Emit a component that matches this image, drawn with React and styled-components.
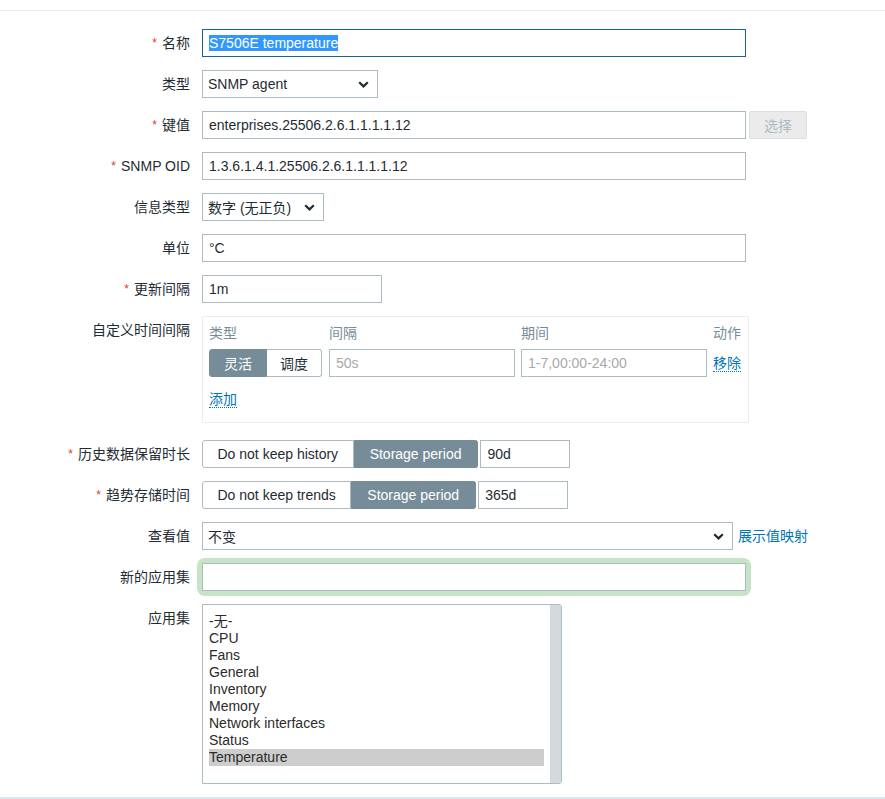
import React from 'react';
import styled, { createGlobalStyle } from 'styled-components';

const GlobalStyle = createGlobalStyle`
  html, body {
    margin: 0;
    padding: 0;
    background: #fff;
  }
  body {
    font-family: "Liberation Sans", Arial, "Noto Sans CJK SC", sans-serif;
    font-size: 14px;
    color: #1f2c33;
  }
  * {
    box-sizing: border-box;
  }
`;

const Page = styled.div`
  display: flex;
  flex-direction: column;
  height: 100vh;
  overflow: hidden;
`;

const TopRule = styled.div`
  height: 11px;
  border-bottom: 1px solid #ebebeb;
`;

const BottomRule = styled.div`
  height: 2px;
  background: #dae7ee;
`;

const Form = styled.div`
  flex: 1;
  display: grid;
  grid-template-columns: 190px 1fr;
  column-gap: 12px;
  row-gap: 13px;
  align-content: start;
  padding-top: 18px;
`;

const Label = styled.div`
  text-align: right;
  padding-top: 5px;
  line-height: 18px;
  white-space: nowrap;
  color: #1f2c33;
`;

const Asterisk = styled.span`
  color: #e33734;
  font-size: 12px;
  margin-right: 5px;
  vertical-align: 1px;
`;

const Field = styled.div`
  display: flex;
  align-items: center;
  gap: ${({ $gap }) => $gap ?? 3}px;
  min-height: 28px;
`;

const TextInput = styled.input`
  width: ${({ $w }) => $w}px;
  height: 28px;
  margin: 0;
  padding: 0 6px;
  border: 1px solid #acbbc2;
  border-radius: 0;
  background: #fff;
  font: inherit;
  font-size: 14px;
  color: #1f2c33;
  outline: none;

  &::placeholder {
    color: #a9a9a9;
  }
`;

const FocusBox = styled.div`
  width: ${({ $w }) => $w}px;
  height: 28px;
  display: flex;
  align-items: center;
  padding: 0 6px;
  border: 1px solid #13639a;
  background: #fff;
`;

const Selection = styled.span`
  background: #3297fd;
  color: #fff;
  line-height: 16px;
`;

const SelectBox = styled.div`
  width: ${({ $w }) => $w}px;
  height: 28px;
  display: flex;
  align-items: center;
  justify-content: space-between;
  padding: 0 8px 0 5px;
  border: 1px solid #acbbc2;
  background: #fff;
  white-space: nowrap;
`;

const Chevron = () => (
  <svg width="11" height="7" viewBox="0 0 11 7">
    <path d="M1.2 1.2 L5.5 5.4 L9.8 1.2" fill="none" stroke="#1f2c33" strokeWidth="2.2" />
  </svg>
);

const GhostButton = styled.div`
  width: 58px;
  height: 28px;
  display: flex;
  align-items: center;
  justify-content: center;
  background: #ebebeb;
  border: 1px solid #d9dfe3;
  border-radius: 2px;
  color: #acbbc2;
`;

const Segmented = styled.div`
  display: flex;
  height: 28px;
`;

const Seg = styled.div`
  height: 28px;
  display: flex;
  align-items: center;
  padding: 0 ${({ $pad }) => $pad ?? 14.5}px;
  white-space: nowrap;
  border: 1px solid ${({ $active }) => ($active ? '#768d99' : '#acbbc2')};
  background: ${({ $active }) => ($active ? '#768d99' : '#fff')};
  color: ${({ $active }) => ($active ? '#fff' : '#1f2c33')};

  &:first-child {
    border-radius: 3px 0 0 3px;
  }
  &:last-child {
    border-radius: 0 3px 3px 0;
  }
  & + & {
    border-left: none;
  }
`;

const IntervalBox = styled.div`
  width: 547px;
  border: 1px solid #ebeef0;
  padding: 8px 6px 14px 6px;
  margin-bottom: 4px;
  display: grid;
  grid-template-columns: 114px 186px 186px auto;
  column-gap: 6px;
  align-items: center;
`;

const HeadCell = styled.div`
  color: #768d99;
  line-height: 17px;
  margin-bottom: 7px;
`;

const Link = styled.span`
  color: #0275b8;
  line-height: 17px;
  cursor: pointer;
  border-bottom: ${({ $dotted }) => ($dotted ? '1px dotted #0275b8' : 'none')};
`;

const AddRow = styled.div`
  grid-column: 1 / -1;
  padding-top: 14px;
  line-height: 17px;
`;

const Glow = styled.div`
  border-radius: 3px;
  box-shadow: 0 0 0 5px #c8e4c6;
`;

const ListBox = styled.div`
  width: 360px;
  height: 180px;
  display: flex;
  border: 1px solid #acbbc2;
  border-radius: 0 3px 3px 0;
  background: #fff;
  overflow: hidden;
`;

const Options = styled.div`
  flex: 1;
  padding: 8px 6px;
`;

const Option = styled.div`
  height: 17px;
  line-height: 17px;
  color: #2b2b2b;
  background: ${({ $selected }) => ($selected ? '#cdcdcd' : 'transparent')};
`;

const ScrollTrack = styled.div`
  width: 11px;
  background: #d2dae0;
`;

const Req = ({ children }) => (
  <Label>
    <Asterisk>*</Asterisk>
    {children}
  </Label>
);

const applications = [
  '-无-',
  'CPU',
  'Fans',
  'General',
  'Inventory',
  'Memory',
  'Network interfaces',
  'Status',
  'Temperature',
];

export default function App() {
  return (
    <Page>
      <GlobalStyle />
      <TopRule />
      <Form>
        <Req>名称</Req>
        <Field>
          <FocusBox $w={544}>
            <Selection>S7506E temperature</Selection>
          </FocusBox>
        </Field>

        <Label>类型</Label>
        <Field>
          <SelectBox $w={176}>
            SNMP agent
            <Chevron />
          </SelectBox>
        </Field>

        <Req>键值</Req>
        <Field>
          <TextInput $w={544} readOnly defaultValue="enterprises.25506.2.6.1.1.1.1.12" />
          <GhostButton>选择</GhostButton>
        </Field>

        <Req>SNMP OID</Req>
        <Field>
          <TextInput $w={544} readOnly defaultValue="1.3.6.1.4.1.25506.2.6.1.1.1.1.12" />
        </Field>

        <Label>信息类型</Label>
        <Field>
          <SelectBox $w={122}>
            数字 (无正负)
            <Chevron />
          </SelectBox>
        </Field>

        <Label>单位</Label>
        <Field>
          <TextInput $w={544} readOnly defaultValue="°C" />
        </Field>

        <Req>更新间隔</Req>
        <Field>
          <TextInput $w={180} readOnly defaultValue="1m" />
        </Field>

        <Label>自定义时间间隔</Label>
        <Field>
          <IntervalBox>
            <HeadCell>类型</HeadCell>
            <HeadCell>间隔</HeadCell>
            <HeadCell>期间</HeadCell>
            <HeadCell>动作</HeadCell>
            <Segmented>
              <Seg $active $pad={14}>灵活</Seg>
              <Seg $pad={13}>调度</Seg>
            </Segmented>
            <TextInput $w={186} readOnly placeholder="50s" />
            <TextInput $w={186} readOnly placeholder="1-7,00:00-24:00" />
            <div>
              <Link $dotted>移除</Link>
            </div>
            <AddRow>
              <Link $dotted>添加</Link>
            </AddRow>
          </IntervalBox>
        </Field>

        <Req>历史数据保留时长</Req>
        <Field $gap={2}>
          <Segmented>
            <Seg>Do not keep history</Seg>
            <Seg $active $pad={16}>Storage period</Seg>
          </Segmented>
          <TextInput $w={90} readOnly defaultValue="90d" />
        </Field>

        <Req>趋势存储时间</Req>
        <Field $gap={2}>
          <Segmented>
            <Seg>Do not keep trends</Seg>
            <Seg $active $pad={16}>Storage period</Seg>
          </Segmented>
          <TextInput $w={90} readOnly defaultValue="365d" />
        </Field>

        <Label>查看值</Label>
        <Field $gap={5}>
          <SelectBox $w={531}>
            不变
            <Chevron />
          </SelectBox>
          <Link>展示值映射</Link>
        </Field>

        <Label>新的应用集</Label>
        <Field>
          <Glow>
            <TextInput $w={544} readOnly defaultValue="" />
          </Glow>
        </Field>

        <Label>应用集</Label>
        <Field>
          <ListBox>
            <Options>
              {applications.map((name) => (
                <Option key={name} $selected={name === 'Temperature'}>
                  {name}
                </Option>
              ))}
            </Options>
            <ScrollTrack />
          </ListBox>
        </Field>
      </Form>
      <BottomRule />
    </Page>
  );
}
